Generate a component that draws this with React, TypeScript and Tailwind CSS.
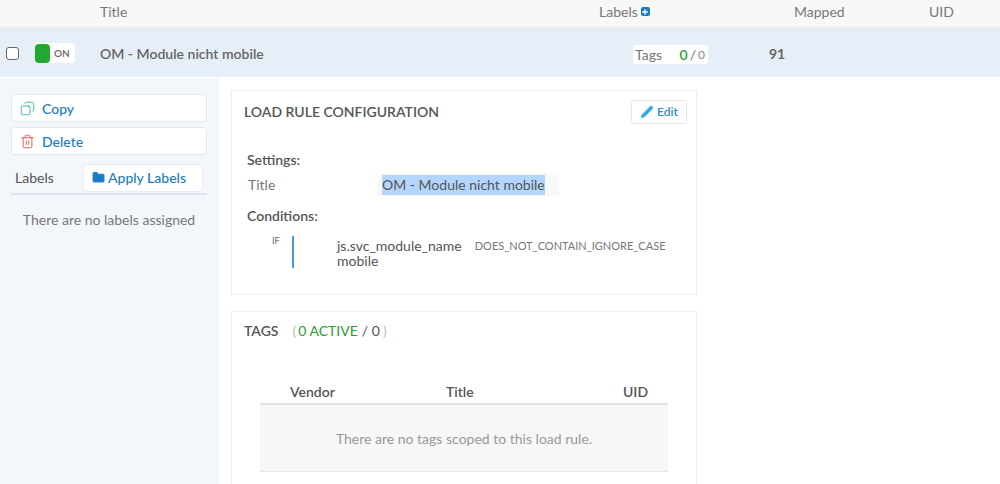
import { Pencil, Folder, Copy, Trash2, Plus } from 'lucide-react';

export default function App() {
  return (
    <div className="h-[484px] w-[1000px] overflow-hidden bg-white font-['Lato',sans-serif] text-[14px] text-[#555]">
      {/* column header */}
      <div className="flex h-[29px] items-center border-b-2 border-[#eeeeee] bg-[#f8f8f8] pb-[4px] text-[#777]">
        <div className="w-[100px]" />
        <div className="w-[499px]">Title</div>
        <div className="flex w-[195px] items-center gap-[3px]">
          Labels
          <span className="flex h-[9px] w-[9px] items-center justify-center rounded-[2px] bg-[#1a7cc4]">
            <Plus className="h-[8px] w-[8px] text-white" strokeWidth={4} />
          </span>
        </div>
        <div className="w-[135px]">Mapped</div>
        <div>UID</div>
      </div>

      {/* load rule row */}
      <div className="flex h-[48px] items-center bg-[#e6eef7]">
        <input type="checkbox" className="ml-[6px] h-[13px] w-[13px] appearance-none rounded-[3px] border border-[#666] bg-white" />
        <div className="ml-[16px] flex h-[20px] w-[40px] items-center rounded-[3px] bg-white">
          <span className="h-[19px] w-[15px] rounded-[4px] bg-[#22a82e]" />
          <span className="ml-[4px] text-[10px] font-semibold text-[#666]">ON</span>
        </div>
        <div className="ml-[25px] w-[533px] font-semibold text-[#666]">OM - Module nicht mobile</div>
        <div className="mt-[3px] flex h-[19px] w-[75px] items-center rounded-[3px] bg-white px-[2px] text-[#777]">
          <span>Tags</span>
          <span className="ml-auto font-semibold text-[#2aa52f]">0</span>
          <span className="mx-[2px] text-[#777]">/</span>
          <span className="mr-[1px] text-[12px] text-[#888]">0</span>
        </div>
        <div className="ml-[61px] font-bold text-[#666]">91</div>
      </div>

      <div className="flex">
        {/* left sidebar */}
        <div className="mt-[1px] h-[407px] w-[219px] bg-[#f3f7fc] pl-[11px] pr-[12px] pt-[16px]">
          <button className="flex h-[28px] w-full items-center gap-[7px] rounded-[4px] border border-[#e4e9ef] bg-white pl-[8px] font-medium text-[#1a7cc4]">
            <Copy className="h-[15px] w-[15px] -scale-x-100 text-[#35b8ad]" strokeWidth={1.5} />
            Copy
          </button>
          <button className="mt-[5px] flex h-[28px] w-full items-center gap-[7px] rounded-[4px] border border-[#e4e9ef] bg-white pl-[8px] font-medium text-[#1a7cc4]">
            <Trash2 className="h-[15px] w-[15px] text-[#f05050]" strokeWidth={1.5} />
            Delete
          </button>
          <div className="mt-[9px] flex h-[31px] items-center border-b-2 border-[#dbe5f0] pb-[2px]">
            <span className="ml-[4px] w-[68px] text-[#555]">Labels</span>
            <button className="flex h-[28px] w-[120px] items-center gap-[3px] rounded-[4px] border border-[#e9edf2] bg-white pl-[8px] font-medium text-[#1a7cc4]">
              <Folder className="h-[13px] w-[13px] fill-[#1a7cc4] text-[#1a7cc4]" />
              Apply Labels
            </button>
          </div>
          <div className="mt-[14px] text-center text-[#777]">There are no labels assigned</div>
        </div>

        {/* main column */}
        <div className="ml-[12px] w-[466px] pt-[13px]">
          <div className="h-[205px] border border-[#eeeeee] bg-white">
            <div className="flex justify-between pl-[12px] pr-[9px] pt-[9px]">
              <h2 className="mt-[1px] font-semibold text-[#555]">LOAD RULE CONFIGURATION</h2>
              <button className="flex h-[24px] w-[56px] items-center justify-center gap-[3px] rounded-[3px] border border-[#e4e9ef] text-[12px] font-semibold text-[#2f8ac9]">
                <Pencil className="h-[14px] w-[14px] fill-[#35a9e8] text-[#35a9e8]" strokeWidth={1} />
                Edit
              </button>
            </div>
            <div className="pl-[15px] pt-[26px]">
              <div className="font-semibold leading-[20px]">Settings:</div>
              <div className="mt-[3px] flex h-[23px] items-center">
                <span className="ml-[1px] w-[129px] text-[#777]">Title</span>
                <div className="flex h-[23px] w-[182px] items-center bg-[#f8f8f8] pl-[5px]">
                  <span className="bg-[#b4d5fe] leading-[20px]">OM - Module nicht mobile</span>
                </div>
              </div>
              <div className="mt-[10px] font-semibold leading-[20px]">Conditions:</div>
              <div className="mt-[10px] flex">
                <span className="ml-[25px] w-[20px] text-[9px] leading-[10px] text-[#666]">IF</span>
                <span className="h-[32px] w-[2px] bg-[#3f97ea]" />
                <div className="ml-[43px] leading-[15px]">
                  <div className="mt-[2px] flex items-center">
                    <span>js.svc_module_name</span>
                    <span className="ml-[13px] text-[11px] text-[#777]">DOES_NOT_CONTAIN_IGNORE_CASE</span>
                  </div>
                  <div>mobile</div>
                </div>
              </div>
            </div>
          </div>

          <div className="mt-[16px] h-[200px] border border-[#eeeeee] bg-white">
            <div className="flex items-center pl-[12px] pt-[9px] leading-[20px]">
              <span className="font-semibold">TAGS</span>
              <span className="ml-[14px] text-[#bbb]">(</span>
              <span className="ml-[2px] text-[#2a9d34]">0 ACTIVE</span>
              <span className="ml-[4px]">/ 0</span>
              <span className="ml-[3px] text-[#bbb]">)</span>
            </div>
            <div className="ml-[28px] mt-[42px] w-[408px]">
              <div className="flex h-[22px] items-center border-b-2 border-[#e2e2e2] pb-[3px] font-semibold">
                <span className="ml-[30px] w-[156px]">Vendor</span>
                <span className="w-[177px]">Title</span>
                <span>UID</span>
              </div>
              <div className="flex h-[67px] items-center justify-center border-b border-[#e8e8e8] bg-[#f7f7f7] text-[#999]">
                There are no tags scoped to this load rule.
              </div>
            </div>
          </div>
        </div>
      </div>
    </div>
  );
}
